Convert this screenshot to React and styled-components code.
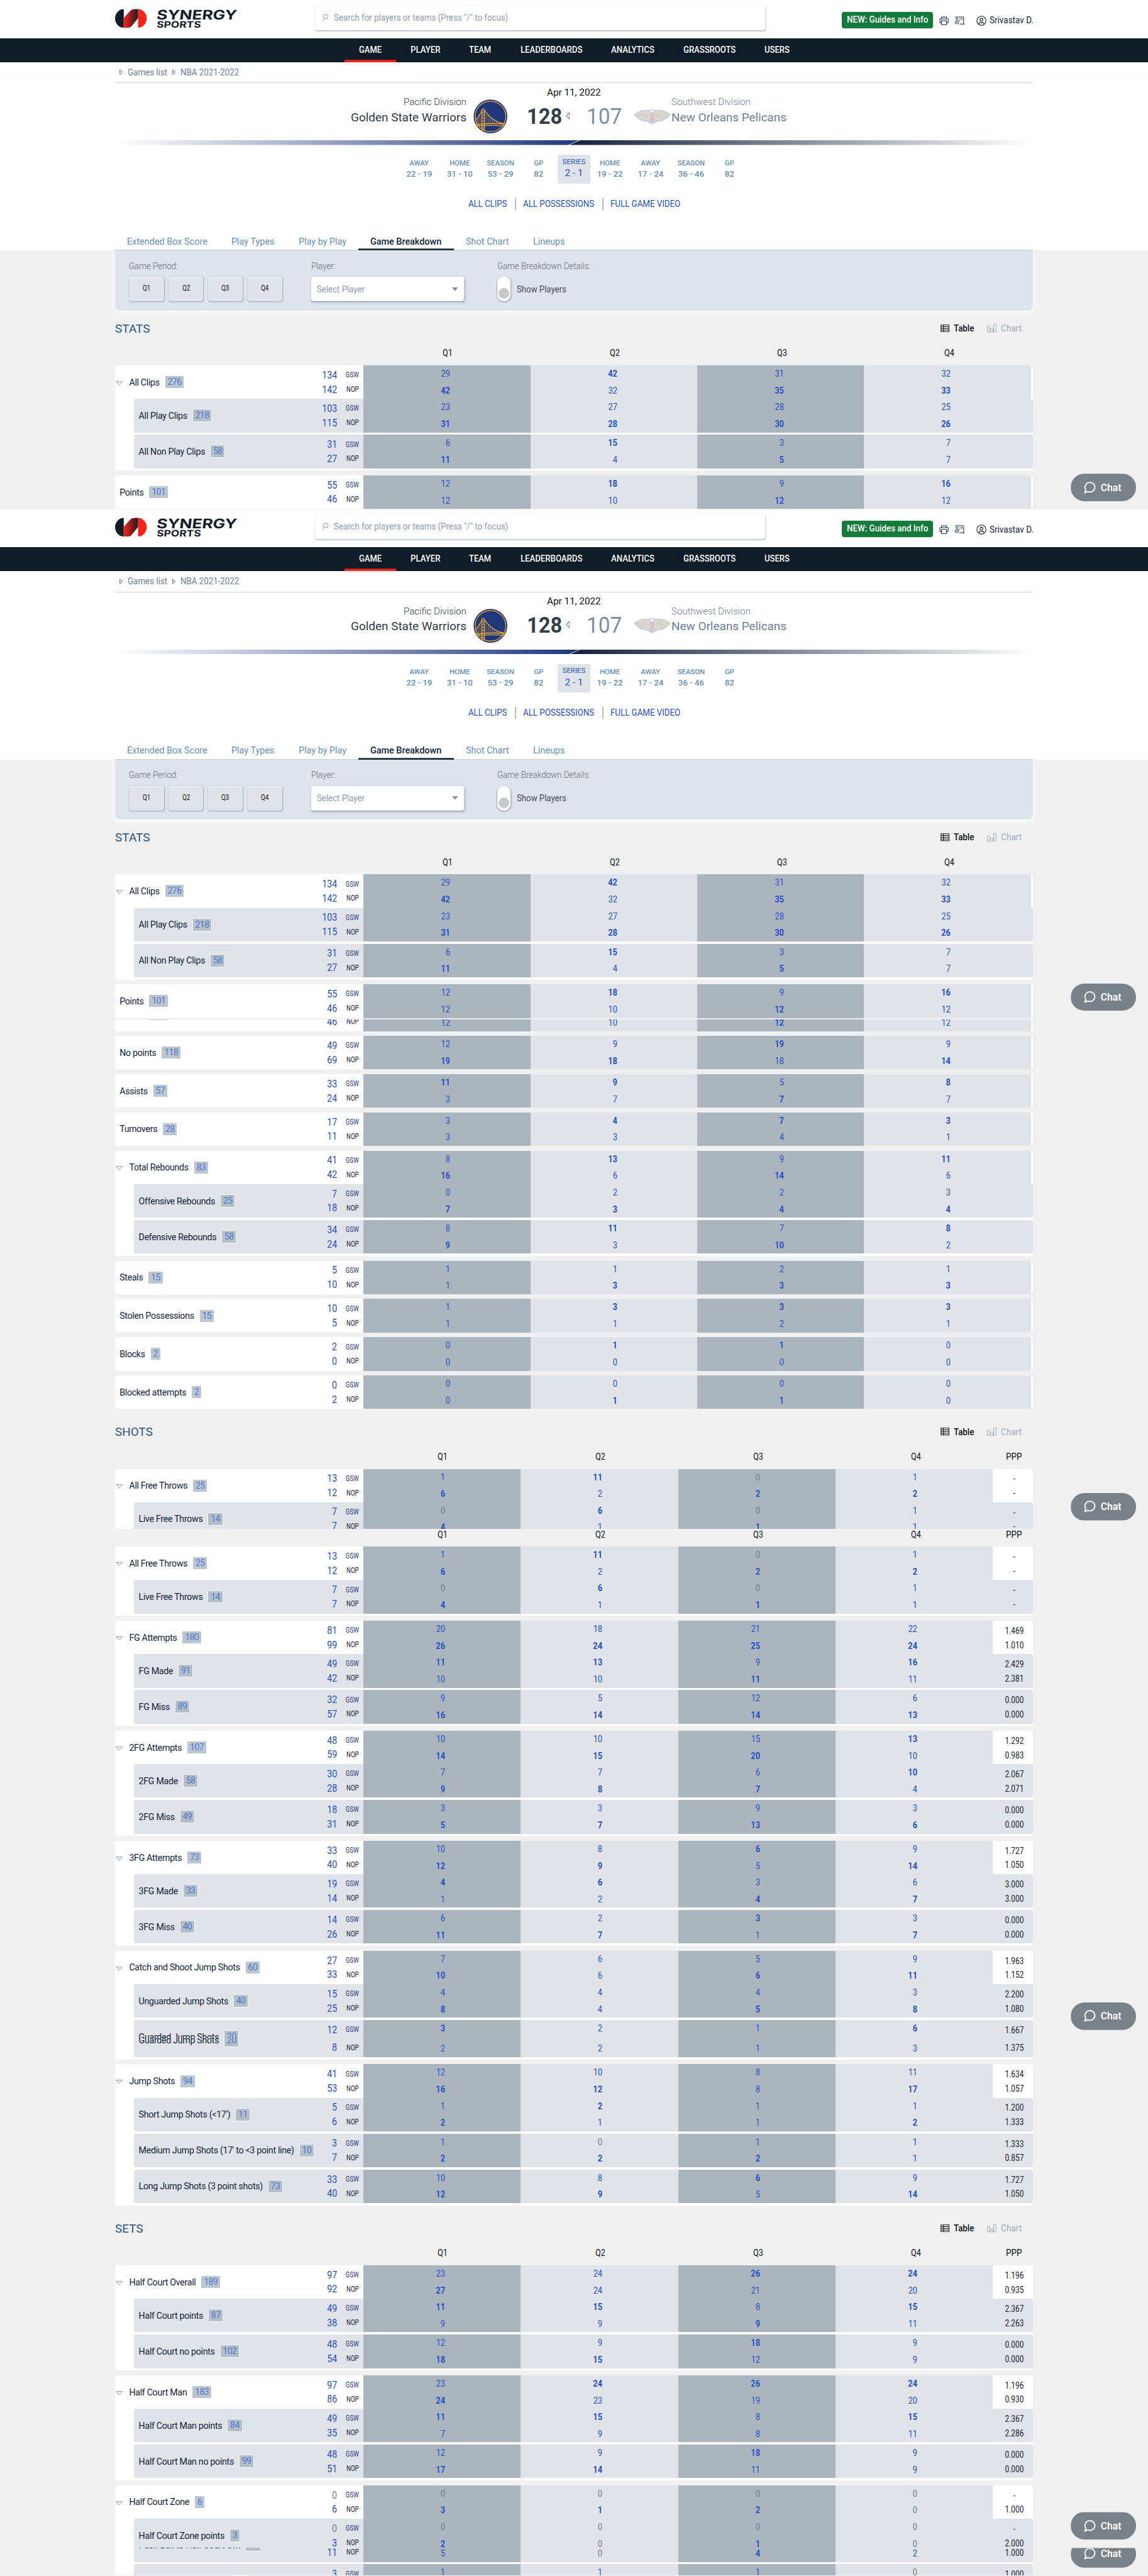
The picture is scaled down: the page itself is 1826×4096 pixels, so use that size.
import React, { useLayoutEffect, useRef, useState } from "react";
import styled, { createGlobalStyle, css } from "styled-components";

const Global = createGlobalStyle`
  *, *::before, *::after { box-sizing: border-box; }
  html, body { margin: 0; padding: 0; background: #efefef; overflow: hidden; }
  body { font-family: Roboto, "Liberation Sans", sans-serif; }
`;

const link = "#2450cb";
const steel = "#6590b7";
const ink = "#12243a";
const navy = "#0f1b26";

const Page = styled.div`
  position: relative;
  width: 1920px;
  height: 4307px;
  overflow: hidden;
  zoom: 0.951042;
  background: #f0f0f0;
`;

const Screen = styled.section`
  height: 852px;
  overflow: hidden;
`;

const Content = styled.div`
  padding: 0 192px;
`;

/* ---------- text set to a given width ---------- */
const FitBox = styled.span`
  display: inline-block;
  flex: none;
  width: ${(p) => p.$w}px;
  white-space: nowrap;
`;
const FitInner = styled.span`
  display: inline-block;
  transform-origin: 0 50%;
`;
function Fit({ w, children }) {
  const outer = useRef(null);
  const inner = useRef(null);
  const [k, setK] = useState(1);
  useLayoutEffect(() => {
    const a = outer.current.getBoundingClientRect().width;
    const b = inner.current.getBoundingClientRect().width;
    if (b > 0) setK(a / b);
  }, []);
  return (
    <FitBox ref={outer} $w={w}>
      <FitInner ref={inner} style={{ transform: `scaleX(${k})` }}>
        {children}
      </FitInner>
    </FitBox>
  );
}

/* ---------- header ---------- */
const White = styled.div`
  background: #fff;
  margin-top: ${(p) => (p.$cut ? -1 : 0)}px;
`;
const TopBar = styled.header`
  height: 64px;
  padding: 0 192px;
  display: flex;
  align-items: flex-start;
`;
const LogoArea = styled.div`
  width: 335px;
  padding-top: 7px;
`;
const Search = styled.div`
  width: 753px;
  height: 41px;
  margin-top: 9px;
  padding-left: 11px;
  display: flex;
  align-items: center;
  gap: 9px;
  border-radius: 4px;
  background: #fff;
  color: #8d9db1;
  font-size: 15px;
  box-shadow: 1px 2px 2px rgba(120, 140, 175, 0.45), 0 0 1px rgba(120, 140, 175, 0.2);
`;
const Tools = styled.div`
  margin-left: auto;
  padding-top: 20px;
  display: flex;
  align-items: center;
  color: ${ink};
  font-size: 16px;
`;
const Guides = styled.div`
  width: 153px;
  height: 27px;
  padding-left: 8.5px;
  margin-right: 10px;
  border-radius: 4px;
  background: #127a3b;
  color: #fff;
  font-weight: 500;
  line-height: 27px;
  box-shadow: 0 1px 3px rgba(0, 0, 0, 0.15);
`;
const ToolIcon = styled.span`
  display: flex;
  margin-top: 2px;
  margin-right: ${(p) => p.$gap}px;
`;
const User = styled.span`
  margin-top: 1px;
`;

const Nav = styled.nav`
  height: 40px;
  padding-left: 576px;
  display: flex;
  background: ${navy};
  border-bottom: 1px solid #0a0f1e;
  color: #fff;
  font-size: 16px;
  font-weight: 500;
  line-height: 39px;
`;
const NavItem = styled.div`
  height: 40px;
  padding: 0 24.2px;
  box-shadow: ${(p) => (p.$active ? "inset 0 -4px 0 #fb2318" : "none")};
`;

const Crumbs = styled.div`
  height: 35px;
  margin: 0 192px;
  padding-left: 8px;
  display: flex;
  align-items: center;
  color: #6c8193;
  font-size: 14.5px;
  border-bottom: 1px solid #cbd2d9;
`;
const CrumbArrow = styled.span`
  display: flex;
  margin: 0 7.5px 0 ${(p) => (p.$first ? 0 : 8.5)}px;
`;

const Match = styled.div`
  height: 96px;
  position: relative;
  display: flex;
  justify-content: center;
`;
const MatchDate = styled.div`
  position: absolute;
  top: 5px;
  left: 0;
  right: 0;
  text-align: center;
  color: #0b0d10;
  font-size: 16px;
  line-height: 22px;
`;
const Side = styled.div`
  width: 960px;
  display: flex;
  padding-top: ${(p) => p.$top || 0}px;
  justify-content: ${(p) => (p.$away ? "flex-start" : "flex-end")};
`;
const TeamText = styled.div`
  padding-top: 20px;
  text-align: ${(p) => (p.$away ? "left" : "right")};
  color: ${(p) => (p.$away ? "#6c8194" : "#2f3b46")};
  font-size: 20px;
  line-height: 28px;
`;
const Division = styled.div`
  font-size: 16px;
  font-weight: 300;
  line-height: 24px;
`;
const TeamLogo = styled.div`
  width: ${(p) => p.$w}px;
  margin: ${(p) => p.$m};
`;
const Score = styled.div`
  padding-top: 34px;
  font-size: 36.5px;
  line-height: 44px;
  font-weight: ${(p) => (p.$win ? 700 : 400)};
  color: ${(p) => (p.$win ? "#343f48" : "#7c8fa1")};
`;
const WinMark = styled.div`
  margin: 48px 7px 0 6px;
`;

const Bar = styled.div`
  height: 8px;
  margin: 0 192px;
`;

const Records = styled.div`
  height: 80px;
  padding: 16px 0 0 667px;
  display: flex;
  align-items: flex-start;
`;
const RecordCell = styled.div`
  width: ${(p) => p.$w}px;
  padding-top: 4px;
  text-align: center;
  color: ${steel};
  font-size: 12px;
  font-weight: 500;
  line-height: 20px;
  letter-spacing: -0.05px;
`;
const RecordValue = styled.div`
  font-size: 14px;
  font-weight: 500;
  line-height: 17px;
`;
const Series = styled.div`
  width: 54px;
  height: 48px;
  margin: 0 -1px 0 2px;
  padding-top: 3px;
  border-radius: 2px;
  background: #e0e3e8;
  text-align: center;
  color: ${link};
  font-size: 12px;
  line-height: 18px;
  & > div { font-size: 16px; line-height: 21px; }
`;

const ClipLinks = styled.div`
  height: 68px;
  padding: 8px 0 0 783.6px;
  display: flex;
  color: ${link};
  font-size: 14.5px;
  line-height: 20px;
`;
const LinkDivider = styled.span`
  width: 2px;
  height: 20px;
  margin: 0 12px 0 13px;
  background: #b6bfc8;
`;

const Tabs = styled.div`
  height: 28px;
  margin: 0 192px;
  display: flex;
  border-bottom: 1px solid #b9c4cf;
`;
const Tab = styled.div`
  height: 28px;
  padding: 0 20.2px;
  color: ${(p) => (p.$active ? "#0f2338" : steel)};
  font-size: 16px;
  font-weight: ${(p) => (p.$active ? 500 : 400)};
  line-height: 26px;
  box-shadow: ${(p) => (p.$active ? "inset 0 -3px 0 #1c2b3a" : "none")};
`;

const Filters = styled.div`
  height: 100px;
  margin: 0 192px;
  padding: 16px 24px 0;
  display: flex;
  border-radius: 0 0 8px 8px;
  background: #dfe3eb;
  box-shadow: 0 4px 10px rgba(255, 255, 255, 0.9);
  color: #5d6c79;
  font-size: 14.5px;
`;
const Filter = styled.div`
  width: ${(p) => p.$w}px;
`;
const FilterLabel = styled.div`
  height: 28px;
  line-height: 21px;
  font-weight: 300;
`;
const Periods = styled.div`
  display: flex;
  gap: 8px;
`;
const Period = styled.div`
  width: 58px;
  height: 41px;
  border-radius: 4px;
  background: #e1e3e8;
  box-shadow: inset 0 2px 0 #edeff2, 1px 1px 2px #9aa6b8;
  color: #0f1214;
  line-height: 39px;
  font-size: 12.5px;
  text-align: center;
`;
const Select = styled.div`
  width: 256px;
  height: 41px;
  padding: 0 10px;
  display: flex;
  align-items: center;
  justify-content: space-between;
  border-radius: 4px;
  background: #fff;
  color: #8c9db2;
  font-size: 15px;
  box-shadow: 0 2px 1px -1px #8496b5, 2px 2px 5px #b4bfce;
`;
const ToggleRow = styled.div`
  display: flex;
  align-items: center;
  gap: 10px;
  color: #3f4e5b;
  font-size: 15px;
`;
const Toggle = styled.div`
  width: 22px;
  height: 41px;
  padding: 19px 2px 0;
  border-radius: 10px;
  background: #fff;
  box-shadow: -1px 1px 1px #a2adbd, 1px 1px 3px #8b97a8;
`;
const Knob = styled.div`
  width: 18px;
  height: 18px;
  border-radius: 50%;
  background: #c5c8cc;
`;

/* ---------- sections ---------- */
const SectionHead = styled.div`
  height: 62px;
  padding: 0 19px 2px 0;
  display: flex;
  align-items: center;
  color: #2b5680;
  font-size: 20px;
`;
const View = styled.div`
  display: flex;
  align-items: center;
  gap: 7.5px;
  margin-left: ${(p) => p.$ml};
  color: ${(p) => (p.$on ? "#0c0e10" : "#9babb9")};
  font-size: 16px;
  font-weight: ${(p) => (p.$on ? 500 : 400)};
`;
const ColHead = styled.div`
  height: 30px;
  padding-left: 416px;
  display: flex;
  font-size: 16px;
  line-height: 20px;
  color: #0b0d10;
  text-align: center;
`;
const ColName = styled.div`
  width: ${(p) => p.$w}px;
`;

const Group = styled.div`
  margin-bottom: 8px;
  overflow: hidden;
  border-radius: 4px;
  background: #fff;
`;
const Slice = styled.div`
  height: ${(p) => p.$h}px;
  overflow: hidden;
`;
const SliceInner = styled.div`
  height: 60px;
  margin-top: ${(p) => -p.$from}px;
`;
const RowBox = styled.div`
  height: 56px;
  display: flex;
  ${(p) =>
    p.$sub &&
    css`
      margin: 0 0 4px 32px;
      border-radius: 3px;
      overflow: hidden;
      background: #e0e3e8;
    `}
`;
const Name = styled.div`
  flex: 1;
  padding-left: ${(p) => p.$pl}px;
  display: flex;
  align-items: center;
  color: ${ink};
  font-size: 15px;
  letter-spacing: -0.34px;
`;
const Caret = styled.span`
  display: flex;
  width: 22px;
  padding-top: 3px;
`;
const Count = styled.span`
  height: ${(p) => (p.$sub ? 22 : 20)}px;
  margin-left: ${(p) => (p.$sub ? 8.3 : 9.3)}px;
  padding: 0 4px;
  line-height: 20px;
  border-radius: 1px;
  border: ${(p) => (p.$sub ? "1px solid #f6f7f9" : "0")};
  background: ${(p) => (p.$sub ? "#b4c0c7" : "#bcc6ce")};
  color: #4f76d6;
  letter-spacing: -0.7px;
`;
const Blank = styled.span`
  width: 150px;
`;
const Totals = styled.div`
  padding: 4px 8px 0 0;
`;
const TotalLine = styled.div`
  height: 24px;
  display: flex;
  align-items: center;
  justify-content: flex-end;
`;
const Total = styled.span`
  transform: scaleX(0.88);
  transform-origin: 100% 50%;
  color: ${(p) => (p.$zero ? "#6b7b88" : link)};
  font-size: 17px;
`;
const Code = styled.span`
  width: 28px;
  margin-left: 8px;
  transform: scaleX(0.78);
  transform-origin: 100% 50%;
  text-align: right;
  color: ${(p) => (p.$home ? "#25357f" : "#182338")};
  font-size: 13px;
`;
const Cell = styled.div`
  width: ${(p) => p.$w}px;
  padding-right: ${(p) => p.$w * 0.48}px;
  background: ${(p) => (p.$dark ? "#abb5be" : "#e0e3e8")};
  text-align: right;
`;
const Num = styled.div`
  height: 28px;
  line-height: 28px;
  color: ${(p) => (p.$zero ? "#6b7b88" : link)};
  font-size: 15px;
  font-weight: ${(p) => (p.$bold ? 700 : 400)};
  transform: scaleX(0.9);
  transform-origin: 100% 50%;
`;
const Ppp = styled.div`
  width: 68px;
  padding: 5px 0 0 4px;
  color: #14202c;
  font-size: 15px;
  line-height: 24px;
  text-align: center;
  & > div { transform: scaleX(0.83); }
`;
const Edge = styled.div`
  width: 4px;
`;

const Chat = styled.div`
  position: absolute;
  left: 1791px;
  top: ${(p) => p.$top}px;
  width: 109px;
  height: 46px;
  padding-left: 22px;
  display: flex;
  align-items: center;
  gap: 8px;
  border-radius: 23px;
  background: #7a8289;
  color: #fff;
  font-size: 16.5px;
  font-weight: 600;
  clip-path: inset(${(p) => p.$cut || 0}px 0 0 0);
`;

/* ---------- drawings ---------- */
function SynergyLogo() {
  return (
    <svg width="240" height="48" viewBox="0 -8 240 48" style={{ display: "block" }}>
      <defs>
        <linearGradient id="syn" x1="14" x2="38" y1="0" y2="0" gradientUnits="userSpaceOnUse">
          <stop offset="0" stopColor="#fb2318" />
          <stop offset="0.3" stopColor="#c21f1c" />
          <stop offset="1" stopColor="#1d1a22" />
        </linearGradient>
      </defs>
      <path d="M14.5 0A14.5 15.5 0 0 0 14.5 31Z" fill="#111c28" />
      <path d="M38.5 0A14.5 15.5 0 0 1 38.5 31Z" fill="#fb2318" />
      <path d="M14.5 31V15L25 3Q28 0 32 0H38.5V15L28 28Q25.5 31 21 31Z" fill="url(#syn)" />
      <g fill="#111c28" fontFamily="Inter, sans-serif" fontWeight="700">
        <text x="71" y="17" fontSize="22" textLength="134" lengthAdjust="spacingAndGlyphs" transform="skewX(-7)">SYNERGY</text>
        <text x="72" y="31" fontSize="15" textLength="74" lengthAdjust="spacingAndGlyphs" transform="skewX(-5)">SPORTS</text>
      </g>
    </svg>
  );
}
const SearchIcon = () => (
  <svg width="11" height="13" viewBox="0 0 11 13" fill="none" stroke="#7e90a6" strokeWidth="1">
    <circle cx="6.6" cy="4.6" r="3.9" />
    <path d="M4 7.5L.5 12.3" />
  </svg>
);
const PrinterIcon = () => (
  <svg width="16" height="17" viewBox="1 1 30 30" fill={ink}>
    <path
      fillRule="evenodd"
      d="M28 9H25V3H7V9H4a2 2 0 0 0-2 2V21a2 2 0 0 0 2 2H7v6H25V23h3a2 2 0 0 0 2-2V11A2 2 0 0 0 28 9ZM9 5H23V9H9ZM23 27H9V17H23ZM28 21H25V15H7v6H4V11H28Z"
    />
  </svg>
);
const BoardIcon = () => (
  <svg width="16" height="14" viewBox="0 0 16 14" fill="none" stroke={ink} strokeWidth="1">
    <path d="M1 2.300V1H14.500V12.800H7.500M13 13H15.800" />
    <circle cx="3.2" cy="4.6" r="1.6" />
    <path d="M.7 13V8.2H5.5L8.5 6.4M3 13V10M5.4 13V8.5M7.5 3.6H9M10 3.6H12.5M10 5.5H12.5" />
  </svg>
);
const UserIcon = () => (
  <svg width="17" height="17" viewBox="1.5 1.5 29 29" fill={ink}>
    <path fillRule="evenodd" d="M16 8a5 5 0 1 0 5 5A5 5 0 0 0 16 8Zm0 8a3 3 0 1 1 3-3A3 3 0 0 1 16 16Z" />
    <path
      fillRule="evenodd"
      d="M16 2A14 14 0 1 0 30 16 14 14 0 0 0 16 2ZM10 26.4V25A3 3 0 0 1 13 22h6a3 3 0 0 1 3 3v1.4a11.9 11.9 0 0 1-12 0Zm14-1.5A5 5 0 0 0 19 20H13a5 5 0 0 0-5 4.900 12 12 0 1 1 16 0Z"
    />
  </svg>
);
const CrumbTri = () => (
  <svg width="6" height="10" viewBox="0 0 6 10" fill="none" stroke="#56616b">
    <path d="M.8 1V9L5 5Z" />
  </svg>
);
const CaretIcon = () => (
  <svg width="12" height="7" viewBox="0 0 12 7" fill="none" stroke="#8796a3">
    <path d="M.8.7H11.2L6 6.2Z" />
  </svg>
);
const WarriorsLogo = () => (
  <svg width="57" height="57" viewBox="0 0 57 57" style={{ display: "block" }}>
    <circle cx="28.5" cy="28.5" r="28.2" fill="#20377c" />
    <circle cx="28.5" cy="28.5" r="25.6" fill="none" stroke="#f0ab36" strokeWidth="1.3" />
    <g fill="none" stroke="#f0ab36">
      <path d="M3.5 42.5Q30 39 53 41.5M3.5 44.8Q30 42.3 52.5 44.6" strokeWidth="1.5" />
      <path d="M14.3 17V53M18.2 17V53" strokeWidth="1.6" />
      <path d="M13.5 17H19M14 21.5H18.5M14 26H18.5M14 31H18.5M14 36H18.5M14 48H18.5M15.2 15.5H17.5" strokeWidth="1.1" />
      <path d="M18.5 18Q32 38 52 40.5M14 19Q10 28 4.2 34" strokeWidth="1.2" />
      <path d="M21 22V41M24.500 26V41M28 29.500V41M31.500 32V41M35 35V41M38.500 37V41M42 38.500V41M11 25V42M8 29.500V42M5.500 33V42" strokeWidth="0.7" />
    </g>
  </svg>
);
const PelicansLogo = () => (
  <svg width="62" height="26" viewBox="0 0 62 26" style={{ display: "block" }}>
    <path d="M0 9Q12 0 25 2L31 .5 37 2Q50 0 62 9Q56 18 46 21Q38 21 34 25L31 26 28 25Q24 21 16 21Q6 18 0 9Z" fill="#c9cedb" />
    <path d="M3 9Q14 3 26 4L28 14 26 19Q20 20 15 18Q8 15 3 9ZM59 9Q48 3 36 4L34 14 36 19Q42 20 47 18Q54 15 59 9Z" fill="#e2dccd" />
    <path d="M5 10L24 8M9 13L25 11M14 16L26 14M57 10L38 8M53 13L37 11M48 16L36 14" stroke="#c0c6d4" strokeWidth="1.2" />
    <path d="M27 3Q31 0 35 3L33 7H29Z" fill="#f6f7f9" stroke="#b9c0ce" strokeWidth=".8" />
    <path d="M28 9H34L32.5 20H29.5Z" fill="#e4bcc0" />
  </svg>
);
const TableIcon = () => (
  <svg width="15" height="13" viewBox="0 0 15 13" fill="none" stroke="#0c0e10" strokeWidth="1.1">
    <path d="M.7 .7H14.3V12.3H.7ZM.7 3.7H14.3M.7 6.6H14.3M.7 9.5H14.3M5 .7V12.3" />
  </svg>
);
const ChartIcon = () => (
  <svg width="16" height="14" viewBox="0 0 16 14" fill="none" stroke="#9babb9">
    <path d="M.6 13.4V4.5H4.5V13.4M5.5 13.4V8.5H10V13.4M11 13.4V.6H15V13.4M.6 13.4H15" />
  </svg>
);
const ChatIcon = () => (
  <svg width="20" height="20" viewBox="0 0 20 20" fill="none" stroke="#fff" strokeWidth="2" strokeLinejoin="round">
    <path d="M10.5 1.2A8.3 8 0 1 1 6.5 16.4L1.5 18.5 3.3 13.7A8.3 8 0 0 1 10.5 1.2Z" />
  </svg>
);
const BarArt = () => (
  <svg width="1536" height="8" viewBox="0 0 1536 8" style={{ display: "block" }}>
    <defs>
      <linearGradient id="barL">
        <stop offset="0" stopColor="#20377c" stopOpacity="0" />
        <stop offset="1" stopColor="#20377c" />
      </linearGradient>
      <linearGradient id="barR">
        <stop offset="0" stopColor="#12203a" />
        <stop offset="1" stopColor="#12203a" stopOpacity="0" />
      </linearGradient>
    </defs>
    <path d="M0 0H776L758 8H0Z" fill="url(#barL)" />
    <path d="M778 0H1536V8H760Z" fill="url(#barR)" />
  </svg>
);

/* ---------- data ---------- */
const NAV = [["GAME", 38], ["PLAYER", 50], ["TEAM", 37], ["LEADERBOARDS", 103.5], ["ANALYTICS", 72.5], ["GRASSROOTS", 87.5], ["USERS", 42]];
const TABS = [["Extended Box Score", 134.5], ["Play Types", 72], ["Play by Play", 80], ["Game Breakdown", 119], ["Shot Chart", 72], ["Lineups", 53]];
const HOME = [["AWAY", "22 - 19", 68], ["HOME", "31 - 10", 68], ["SEASON", "53 - 29", 68], ["GP", "82", 60]];
const AWAY = [["HOME", "19 - 22", 68], ["AWAY", "17 - 24", 68], ["SEASON", "36 - 46", 68], ["GP", "82", 60]];

// name, clip count, totals, home by quarter, away by quarter, points per possession
const CLIPS = [
  ["All Clips", 276, [134, 142], [29, 42, 31, 32], [42, 32, 35, 33]],
  ["All Play Clips", 218, [103, 115], [23, 27, 28, 25], [31, 28, 30, 26]],
  ["All Non Play Clips", 58, [31, 27], [6, 15, 3, 7], [11, 4, 5, 7]],
];
const POINTS = ["Points", 101, [55, 46], [12, 18, 9, 16], [12, 10, 12, 12]];
const STATS = [
  [["No points", 118, [49, 69], [12, 9, 19, 9], [19, 18, 18, 14]]],
  [["Assists", 57, [33, 24], [11, 9, 5, 8], [3, 7, 7, 7]]],
  [["Turnovers", 28, [17, 11], [3, 4, 7, 3], [3, 3, 4, 1]]],
  [
    ["Total Rebounds", 83, [41, 42], [8, 13, 9, 11], [16, 6, 14, 6]],
    ["Offensive Rebounds", 25, [7, 18], [0, 2, 2, 3], [7, 3, 4, 4]],
    ["Defensive Rebounds", 58, [34, 24], [8, 11, 7, 8], [9, 3, 10, 2]],
  ],
  [["Steals", 15, [5, 10], [1, 1, 2, 1], [1, 3, 3, 3]]],
  [["Stolen Possessions", 15, [10, 5], [1, 3, 3, 3], [1, 1, 2, 1]]],
  [["Blocks", 2, [2, 0], [0, 1, 1, 0], [0, 0, 0, 0]]],
  [["Blocked attempts", 2, [0, 2], [0, 0, 0, 0], [0, 1, 1, 0]]],
];
const FREE = ["All Free Throws", 25, [13, 12], [1, 11, 0, 1], [6, 2, 2, 2], ["-", "-"]];
const LIVE = ["Live Free Throws", 14, [7, 7], [0, 6, 0, 1], [4, 1, 1, 1], ["-", "-"]];
const SHOTS = [
  [FREE, LIVE],
  [
    ["FG Attempts", 180, [81, 99], [20, 18, 21, 22], [26, 24, 25, 24], ["1.469", "1.010"]],
    ["FG Made", 91, [49, 42], [11, 13, 9, 16], [10, 10, 11, 11], ["2.429", "2.381"]],
    ["FG Miss", 89, [32, 57], [9, 5, 12, 6], [16, 14, 14, 13], ["0.000", "0.000"]],
  ],
  [
    ["2FG Attempts", 107, [48, 59], [10, 10, 15, 13], [14, 15, 20, 10], ["1.292", "0.983"]],
    ["2FG Made", 58, [30, 28], [7, 7, 6, 10], [9, 8, 7, 4], ["2.067", "2.071"]],
    ["2FG Miss", 49, [18, 31], [3, 3, 9, 3], [5, 7, 13, 6], ["0.000", "0.000"]],
  ],
  [
    ["3FG Attempts", 73, [33, 40], [10, 8, 6, 9], [12, 9, 5, 14], ["1.727", "1.050"]],
    ["3FG Made", 33, [19, 14], [4, 6, 3, 6], [1, 2, 4, 7], ["3.000", "3.000"]],
    ["3FG Miss", 40, [14, 26], [6, 2, 3, 3], [11, 7, 1, 7], ["0.000", "0.000"]],
  ],
];
const CATCH = ["Catch and Shoot Jump Shots", 60, [27, 33], [7, 6, 5, 9], [10, 6, 6, 11], ["1.963", "1.152"]];
const UNGUARDED = ["Unguarded Jump Shots", 40, [15, 25], [4, 4, 4, 3], [8, 4, 5, 8], ["2.200", "1.080"]];
const GUARDED = ["Guarded Jump Shots", 20, [12, 8], [3, 2, 1, 6], [2, 2, 1, 3], ["1.667", "1.375"]];
const JUMP = [
  ["Jump Shots", 94, [41, 53], [12, 10, 8, 11], [16, 12, 8, 17], ["1.634", "1.057"]],
  ["Short Jump Shots (<17')", 11, [5, 6], [1, 2, 1, 1], [2, 1, 1, 2], ["1.200", "1.333"]],
  ["Medium Jump Shots (17' to <3 point line)", 10, [3, 7], [1, 0, 1, 1], [2, 2, 2, 1], ["1.333", "0.857"]],
  ["Long Jump Shots (3 point shots)", 73, [33, 40], [10, 8, 6, 9], [12, 9, 5, 14], ["1.727", "1.050"]],
];
const SETS = [
  [
    ["Half Court Overall", 189, [97, 92], [23, 24, 26, 24], [27, 24, 21, 20], ["1.196", "0.935"]],
    ["Half Court points", 87, [49, 38], [11, 15, 8, 15], [9, 9, 9, 11], ["2.367", "2.263"]],
    ["Half Court no points", 102, [48, 54], [12, 9, 18, 9], [18, 15, 12, 9], ["0.000", "0.000"]],
  ],
  [
    ["Half Court Man", 183, [97, 86], [23, 24, 26, 24], [24, 23, 19, 20], ["1.196", "0.930"]],
    ["Half Court Man points", 84, [49, 35], [11, 15, 8, 15], [7, 9, 8, 11], ["2.367", "2.286"]],
    ["Half Court Man no points", 99, [48, 51], [12, 9, 18, 9], [17, 14, 11, 9], ["0.000", "0.000"]],
  ],
];
const ZONE = ["Half Court Zone", 6, [0, 6], [0, 0, 0, 0], [3, 1, 2, 0], ["-", "1.000"]];
const ZONE_POINTS = ["Half Court Zone points", 3, [0, 3], [0, 0, 0, 0], [2, 0, 1, 0], ["-", "2.000"]];
const PUSH = ["Push Ball to Half Court Off.", 33, [22, 11], [9, 5, 3, 5], [5, 0, 4, 2], ["1.000", "1.000"]];
const LAST = ["", 10, [3, 3], [1, 1, 1, 0], [1, 1, 1, 0], ["1.000", "1.000"]];

/* ---------- parts ---------- */
function Row({ data, sub, open }) {
  const [name, count, totals, home, away, ppp] = data;
  const w = ppp ? 263 : 279;
  return (
    <RowBox $sub={sub}>
      <Name $pl={sub ? 8 : open ? 2 : 8}>
        {open && <Caret><CaretIcon /></Caret>}
        {name ? <span>{name}</span> : <Blank />}
        <Count $sub={sub}>{count}</Count>
      </Name>
      <Totals>
        <TotalLine><Total $zero={ppp && totals[0] === 0}>{totals[0]}</Total><Code $home>GSW</Code></TotalLine>
        <TotalLine><Total $zero={ppp && totals[1] === 0}>{totals[1]}</Total><Code>NOP</Code></TotalLine>
      </Totals>
      {home.map((h, i) => (
        <Cell key={i} $w={w} $dark={i % 2 === 0}>
          <Num $bold={h > away[i]} $zero={ppp && h === 0}>{h}</Num>
          <Num $bold={away[i] > h} $zero={ppp && away[i] === 0}>{away[i]}</Num>
        </Cell>
      ))}
      {ppp ? <Ppp><div>{ppp[0]}</div><div>{ppp[1]}</div></Ppp> : <Edge />}
    </RowBox>
  );
}
const Cut = ({ from, h, ...row }) => (
  <Slice $h={h}><SliceInner $from={from}><Row {...row} /></SliceInner></Slice>
);
const RowGroup = ({ rows }) => (
  <Group>{rows.map((r, i) => <Row key={r[0]} data={r} sub={i > 0} open={i === 0 && rows.length > 1} />)}</Group>
);
const Columns = ({ ppp }) => (
  <ColHead>
    {["Q1", "Q2", "Q3", "Q4"].map((q) => <ColName key={q} $w={ppp ? 264 : 280}><Fit w={16.5}>{q}</Fit></ColName>)}
    {ppp && <ColName $w={64}><Fit w={27}>PPP</Fit></ColName>}
  </ColHead>
);
const SectionTitle = ({ children, w }) => (
  <SectionHead>
    <Fit w={w}>{children}</Fit>
    <View $on $ml="auto"><TableIcon /><Fit w={34}>Table</Fit></View>
    <View $ml="21px"><ChartIcon /><Fit w={35}>Chart</Fit></View>
  </SectionHead>
);
const Record = ({ item }) => (
  <RecordCell $w={item[2]}>{item[0]}<RecordValue>{item[1]}</RecordValue></RecordCell>
);

function GameHeader({ cut }) {
  return (
    <>
      <White $cut={cut}>
        <TopBar>
          <LogoArea><SynergyLogo /></LogoArea>
          <Search><SearchIcon /><Fit w={291.5}>Search for players or teams (Press "/" to focus)</Fit></Search>
          <Tools>
            <Guides><Fit w={136}>NEW: Guides and Info</Fit></Guides>
            <ToolIcon $gap={11}><PrinterIcon /></ToolIcon>
            <ToolIcon $gap={19}><BoardIcon /></ToolIcon>
            <ToolIcon $gap={5}><UserIcon /></ToolIcon>
            <User><Fit w={73.5}>Srivastav D.</Fit></User>
          </Tools>
        </TopBar>
        <Nav>
          {NAV.map(([t, w], i) => <NavItem key={t} $active={i === 0}><Fit w={w}>{t}</Fit></NavItem>)}
        </Nav>
        <Crumbs>
          <CrumbArrow $first><CrumbTri /></CrumbArrow><Fit w={66.5}>Games list</Fit>
          <CrumbArrow><CrumbTri /></CrumbArrow><Fit w={98}>NBA 2021-2022</Fit>
        </Crumbs>
        <Match>
          <MatchDate><Fit w={90}>Apr 11, 2022</Fit></MatchDate>
          <Side>
            <TeamText><Division><Fit w={105}>Pacific Division</Fit></Division><Fit w={193.5}>Golden State Warriors</Fit></TeamText>
            <TeamLogo $w={57} $m="27.5px 32px 0 12px"><WarriorsLogo /></TeamLogo>
            <Score $win><Fit w={59}>128</Fit></Score>
            <WinMark>
              <svg width="7" height="13" viewBox="0 0 7 13" fill="none" stroke="#343f48" style={{ display: "block" }}>
                <path d="M6.3 .8V12.2L.8 6.5Z" />
              </svg>
            </WinMark>
          </Side>
          <Side $away>
            <Score><FitBox $w={21} /><Fit w={59}>107</Fit></Score>
            <TeamLogo $w={62} $m="43px 1.5px 0 20px"><PelicansLogo /></TeamLogo>
            <TeamText $away><Division><Fit w={132.5}>Southwest Division</Fit></Division><Fit w={192.5}>New Orleans Pelicans</Fit></TeamText>
          </Side>
        </Match>
        <Bar><BarArt /></Bar>
        <Records>
          {HOME.map((r) => <Record key={r[0]} item={r} />)}
          <Series>SERIES<div>2 - 1</div></Series>
          {AWAY.map((r) => <Record key={r[0]} item={r} />)}
        </Records>
        <ClipLinks>
          <Fit w={64.5}>ALL CLIPS</Fit><LinkDivider />
          <Fit w={119}>ALL POSSESSIONS</Fit><LinkDivider />
          <Fit w={117}>FULL GAME VIDEO</Fit>
        </ClipLinks>
        <Tabs>
          {TABS.map(([t, w], i) => <Tab key={t} $active={i === 3}><Fit w={w}>{t}</Fit></Tab>)}
        </Tabs>
      </White>
      <Filters>
        <Filter $w={304}>
          <FilterLabel><Fit w={82}>Game Period:</Fit></FilterLabel>
          <Periods>{["Q1", "Q2", "Q3", "Q4"].map((q) => <Period key={q}><Fit w={13}>{q}</Fit></Period>)}</Periods>
        </Filter>
        <Filter $w={312}>
          <FilterLabel><Fit w={40.5}>Player:</Fit></FilterLabel>
          <Select>
            <Fit w={80}>Select Player</Fit>
            <svg width="10" height="6" viewBox="0 0 10 6"><path d="M0 0H10L5 6Z" fill="#8b9096" /></svg>
          </Select>
        </Filter>
        <Filter $w={400}>
          <FilterLabel><Fit w={155.5}>Game Breakdown Details:</Fit></FilterLabel>
          <ToggleRow><Toggle><Knob /></Toggle><Fit w={83}>Show Players</Fit></ToggleRow>
        </Filter>
      </Filters>
      <Content>
        <SectionTitle w={58.5}>STATS</SectionTitle>
        <Columns />
        <RowGroup rows={CLIPS} />
        <RowGroup rows={[POINTS]} />
      </Content>
    </>
  );
}

export default function App() {
  return (
    <>
      <Global />
      <Page>
        <Screen><GameHeader /></Screen>
        <Screen><GameHeader cut /></Screen>
        <Content>
          <Group><Cut from={36} h={20} data={POINTS} /></Group>
          {STATS.map((g) => <RowGroup key={g[0][0]} rows={g} />)}
          <SectionTitle w={63}>SHOTS</SectionTitle>
          <Columns ppp />
          <Slice $h={100}>
            <RowGroup rows={[FREE, LIVE]} />
          </Slice>
          <Columns ppp />
          {SHOTS.map((g) => <RowGroup key={g[0][0]} rows={g} />)}
          <Group>
            <Row data={CATCH} open />
            <Row data={UNGUARDED} sub />
            <Cut from={0} h={30} data={GUARDED} sub />
            <Cut from={24} h={36} data={GUARDED} sub />
          </Group>
          <RowGroup rows={JUMP} />
          <SectionTitle w={47}>SETS</SectionTitle>
          <Columns ppp />
          {SETS.map((g) => <RowGroup key={g[0][0]} rows={g} />)}
          <Group>
            <Row data={ZONE} open />
            <Cut from={0} h={48} data={ZONE_POINTS} sub />
            <Cut from={32} h={28} data={PUSH} sub />
            <Cut from={0} h={19} data={LAST} sub />
          </Group>
        </Content>
        {[792, 1644, 2496, 3348, 4200].map((y) => <Chat key={y} $top={y}><ChatIcon />Chat</Chat>)}
        <Chat $top={4247} $cut={13}><ChatIcon />Chat</Chat>
      </Page>
    </>
  );
}
